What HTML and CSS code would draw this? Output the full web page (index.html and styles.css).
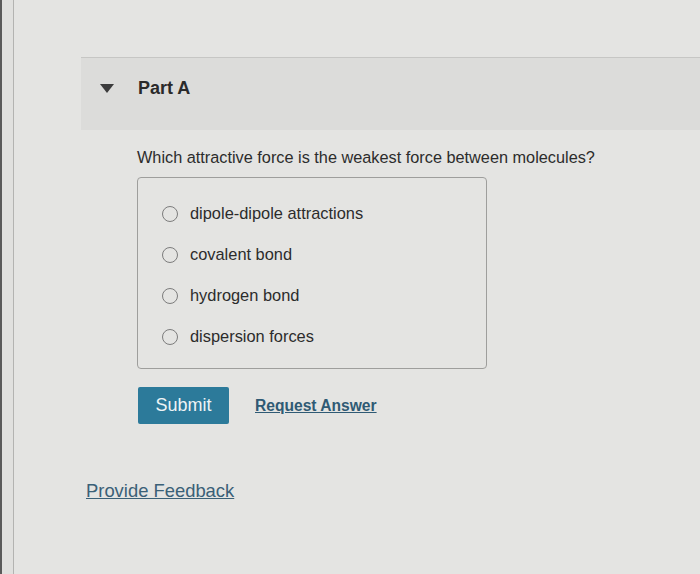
FILE: index.html
```html
<!DOCTYPE html>
<html lang="en">
<head>
<meta charset="utf-8">
<title>Part A</title>
<link rel="stylesheet" href="styles.css">
</head>
<body>
<div class="page">
  <div class="rail"></div>
  <main class="main">
    <section class="part">
      <header class="part-header">
        <span class="caret"></span>
        <h2 class="part-title">Part A</h2>
      </header>
      <div class="part-body">
        <p class="question">Which attractive force is the weakest force between molecules?</p>
        <div class="options">
          <label class="option"><span class="radio"></span><span class="option-text">dipole-dipole attractions</span></label>
          <label class="option"><span class="radio"></span><span class="option-text">covalent bond</span></label>
          <label class="option"><span class="radio"></span><span class="option-text">hydrogen bond</span></label>
          <label class="option"><span class="radio"></span><span class="option-text">dispersion forces</span></label>
        </div>
        <div class="actions">
          <button class="submit" type="button">Submit</button>
          <a class="request" href="#">Request Answer</a>
        </div>
      </div>
      <a class="feedback" href="#">Provide Feedback</a>
    </section>
  </main>
</div>
</body>
</html>
```

FILE: styles.css
```css
html, body {
  margin: 0;
  padding: 0;
}
body {
  background: #e4e4e2;
  font-family: "Liberation Sans", Arial, Helvetica, sans-serif;
  color: #2c2c2c;
}
.page {
  display: flex;
  min-height: 574px;
}
.rail {
  width: 11px;
  flex: none;
  border-left: 2px solid #5a5a5a;
  border-right: 1px solid #b3b3b1;
  background: #e0e0de;
}
.main {
  flex: 1;
  padding-left: 67px;
  padding-top: 57px;
}
.part {
  border-top: 1px solid #c6c6c4;
}
.part-header {
  display: flex;
  align-items: center;
  height: 72px;
  box-sizing: border-box;
  padding: 20px 0 32px 19px;
  background: #dcdcda;
}
.caret {
  width: 0;
  height: 0;
  border-left: 7px solid transparent;
  border-right: 7px solid transparent;
  border-top: 9px solid #3c3c3c;
  margin-right: 24px;
}
.part-title {
  margin: 0;
  font-size: 18px;
  line-height: 20px;
  font-weight: bold;
  color: #2a2a2a;
}
.part-body {
  padding-left: 56px;
}
.question {
  margin: 17px 0 10px;
  font-size: 16.3px;
  line-height: 20px;
}
.options {
  width: 350px;
  box-sizing: border-box;
  border: 1px solid #9e9e9c;
  border-radius: 4px;
  padding: 15px 0 11px 23px;
}
.option {
  display: flex;
  align-items: center;
  height: 41px;
  font-size: 16.4px;
}
.radio {
  width: 14px;
  height: 14px;
  border: 1.5px solid #7c7c7c;
  border-radius: 50%;
  margin-left: 1px;
  margin-right: 12px;
  flex: none;
}
.actions {
  display: flex;
  align-items: center;
  margin-top: 18px;
}
.submit {
  width: 91px;
  height: 37px;
  border: none;
  border-radius: 2px;
  background: #2c7a9a;
  color: #eef4f6;
  font-family: inherit;
  font-size: 18px;
  padding: 0;
  margin-left: 1px;
}
.request {
  margin-left: 26px;
  font-size: 15.6px;
  font-weight: bold;
  color: #2f5a74;
  text-decoration: underline;
}
.feedback {
  display: inline-block;
  margin: 56px 0 0 5px;
  font-size: 18.4px;
  line-height: 22px;
  color: #3a6077;
  text-decoration: underline;
}
```
